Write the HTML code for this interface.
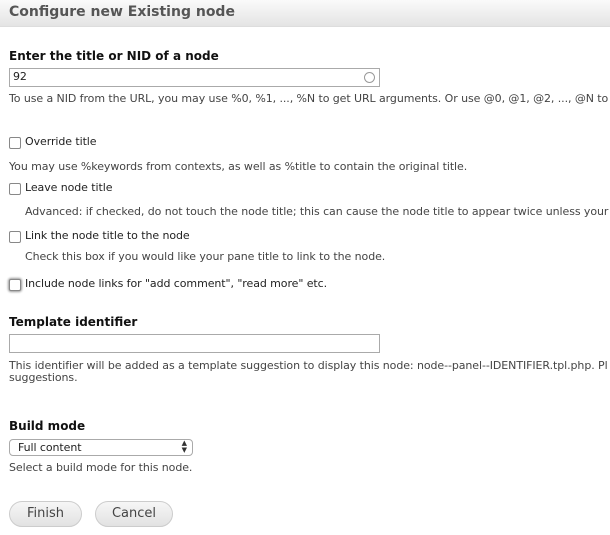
<!DOCTYPE html>
<html><head><style>
body{margin:0;width:610px;height:535px;overflow:hidden;background:#fff;font-family:"DejaVu Sans","Liberation Sans",sans-serif;color:#333;position:relative}
.a{position:absolute;white-space:nowrap}
.hdr{position:absolute;left:0;top:0;width:610px;height:26px;background:linear-gradient(#fafafa,#e4e4e4);border-bottom:1px solid #ddd}
.h{font-size:14px;font-weight:bold;color:#555;left:9px;top:4px}
.lbl{font-size:12px;font-weight:bold;color:#111;left:9px}
.t{font-size:11px;color:#444;letter-spacing:-0.08px}
.cb{position:absolute;left:9px;width:10px;height:10px;border:1px solid #888;border-radius:2px;background:#fff}
.inp{position:absolute;left:9px;border:1px solid #aaa;background:#fff}
.btn{position:absolute;top:501px;height:24px;border:1px solid #ccc;border-radius:13px;background:linear-gradient(#f6f6f6,#e2e2e2);font-size:13px;color:#444;text-align:center;line-height:24px}
</style></head><body>
<div class="hdr"></div>
<div class="a h">Configure new Existing node</div>
<div class="a lbl" style="top:49px">Enter the title or NID of a node</div>
<div class="inp" style="top:68px;width:369px;height:17px"><span class="a t" style="left:3px;top:1px;color:#222">92</span><span style="position:absolute;right:4px;top:3px;width:9px;height:9px;border:1px solid #999;border-radius:50%"></span></div>
<div class="a t" style="left:9px;top:92px">To use a NID from the URL, you may use %0, %1, ..., %N to get URL arguments. Or use @0, @1, @2, ..., @N to use</div>
<div class="cb" style="top:137px"></div><div class="a t" style="left:25px;top:135px;color:#222">Override title</div>
<div class="a t" style="left:9px;top:160px">You may use %keywords from contexts, as well as %title to contain the original title.</div>
<div class="cb" style="top:183px"></div><div class="a t" style="left:25px;top:181px;color:#222">Leave node title</div>
<div class="a t" style="left:25px;top:205px">Advanced: if checked, do not touch the node title; this can cause the node title to appear twice unless your th</div>
<div class="cb" style="top:231px"></div><div class="a t" style="left:25px;top:229px;color:#222">Link the node title to the node</div>
<div class="a t" style="left:25px;top:250px">Check this box if you would like your pane title to link to the node.</div>
<div class="cb" style="top:279px;box-shadow:0 0 2px 1px #999"></div><div class="a t" style="left:25px;top:277px;color:#222">Include node links for "add comment", "read more" etc.</div>
<div class="a lbl" style="top:315px">Template identifier</div>
<div class="inp" style="top:334px;width:369px;height:17px"></div>
<div class="a t" style="left:9px;top:359px">This identifier will be added as a template suggestion to display this node: node--panel--IDENTIFIER.tpl.php. Pl</div>
<div class="a t" style="left:9px;top:371px">suggestions.</div>
<div class="a lbl" style="top:419px">Build mode</div>
<div class="inp" style="top:439px;width:182px;height:15px;border-radius:4px;border-color:#aaa"><span class="a t" style="left:8px;top:1px;color:#222">Full content</span><span class="a" style="right:5px;top:0px;font-size:7px;line-height:7px;color:#333">▲<br>▼</span></div>
<div class="a t" style="left:9px;top:461px">Select a build mode for this node.</div>
<div class="btn" style="left:9px;width:71px">Finish</div>
<div class="btn" style="left:95px;width:76px">Cancel</div>
</body></html>
